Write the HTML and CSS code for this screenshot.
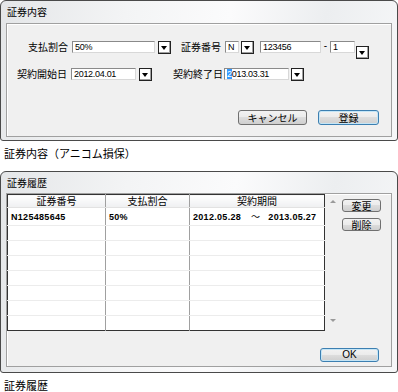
FILE: index.html
```html
<!DOCTYPE html>
<html lang="ja">
<head>
  <meta charset="UTF-8">
  <meta name="viewport" content="width=device-width, initial-scale=1.0">
  <title>証券</title>
  <link rel="stylesheet" href="styles.css">
</head>
<body>
  <!-- 証券内容 ダイアログ -->
  <div class="window win-policy">
    <div class="title">証券内容</div>
    <div class="panel panel-policy">
      <div class="row row-first">
        <span class="label lbl-rate">支払割合</span>
        <span class="field f-rate">50%</span>
        <span class="drop drop-rate"></span>
        <span class="label lbl-no">証券番号</span>
        <span class="field f-prefix">N</span>
        <span class="drop drop-prefix"></span>
        <span class="field f-number">123456</span>
        <span class="dash">-</span>
        <span class="field f-branch">1</span>
        <span class="drop drop-low"></span>
      </div>
      <div class="row row-second">
        <span class="label lbl-start">契約開始日</span>
        <span class="field f-date f-start">2012.04.01</span>
        <span class="drop drop-start"></span>
        <span class="label lbl-end">契約終了日</span>
        <span class="field f-date f-end"><span class="sel">2</span>013.03.31</span>
        <span class="drop"></span>
      </div>
      <div class="actions">
        <button class="btn btn-cancel">キャンセル</button>
        <button class="btn btn-default btn-save">登録</button>
      </div>
    </div>
  </div>
  <p class="caption caption-first">証券内容（アニコム損保）</p>

  <!-- 証券履歴 ダイアログ -->
  <div class="window win-history">
    <div class="title">証券履歴</div>
    <div class="panel panel-history">
      <div class="history-main">
        <table class="grid">
          <colgroup>
            <col class="c-no">
            <col class="c-rate">
            <col class="c-term">
          </colgroup>
          <thead>
            <tr>
              <th>証券番号</th>
              <th>支払割合</th>
              <th>契約期間</th>
            </tr>
          </thead>
          <tbody>
            <tr class="r-data">
              <td>N125485645</td>
              <td>50%</td>
              <td>2012.05.28<span class="tilde">〜</span>2013.05.27</td>
            </tr>
            <tr><td></td><td></td><td></td></tr>
            <tr><td></td><td></td><td></td></tr>
            <tr><td></td><td></td><td></td></tr>
            <tr><td></td><td></td><td></td></tr>
            <tr><td></td><td></td><td></td></tr>
            <tr><td></td><td></td><td></td></tr>
            <tr class="r-last"><td></td><td></td><td></td></tr>
          </tbody>
        </table>
        <div class="scroll">
          <span class="arrow-up"></span>
          <span class="arrow-down"></span>
        </div>
        <div class="side">
          <button class="btn btn-side">変更</button>
          <button class="btn btn-side">削除</button>
        </div>
      </div>
      <div class="actions actions-history">
        <button class="btn btn-default btn-ok">OK</button>
      </div>
    </div>
  </div>
  <p class="caption">証券履歴</p>
</body>
</html>
```

FILE: styles.css
```css
body {
  margin: 0;
  width: 398px;
  font-family: "Noto Sans CJK JP", "Liberation Sans", sans-serif;
  font-size: 10px;
  color: #000;
  background: #fff;
}

/* ウィンドウ枠 */
.window {
  box-sizing: border-box;
  width: 398px;
  border: 1px solid #4a4a4a;
  border-radius: 6px 6px 3px 3px;
  padding: 0 5px 3px 5px;
  background: linear-gradient(100deg, #e4e6e8 0%, #f3f4f5 30%, #fbfbfc 55%, #eceef0 78%, #f6f7f8 100%);
}
.win-policy {
  height: 141px;
}
.win-history {
  height: 202px;
  padding-bottom: 5px;
}
.title {
  height: 22px;
  line-height: 22px;
  padding-left: 1px;
  font-size: 10px;
}
.win-history .title {
  height: 21px;
  line-height: 21px;
}
.panel {
  box-sizing: border-box;
  border: 1px solid #a0a0a0;
  box-shadow: inset 1px 1px 0 #fff;
  background: #f0f0f0;
}
.panel-policy {
  height: 114px;
  padding-top: 17px;
}
.panel-history {
  height: 174px;
}

/* 入力行 */
.row {
  display: flex;
  align-items: flex-start;
  height: 14px;
}
.row-second {
  margin-top: 13px;
}
.label {
  line-height: 12px;
  white-space: nowrap;
}
.lbl-rate {
  width: 61px;
  margin-right: 4px;
  text-align: right;
}
.lbl-start {
  width: 60px;
  margin-right: 4px;
  text-align: right;
}
.lbl-no {
  width: 40px;
  margin-right: 4px;
}
.lbl-end {
  width: 50px;
  margin-right: 1px;
}
.field {
  box-sizing: border-box;
  height: 12px;
  padding-left: 2px;
  background: #fff;
  border: 1px solid;
  border-color: #8a8a8a #d8d8d8 #d8d8d8 #8a8a8a;
  font-family: "Liberation Sans", sans-serif;
  font-size: 9px;
  line-height: 10px;
  letter-spacing: -0.3px;
  white-space: nowrap;
}
.f-rate {
  width: 83px;
  margin-right: 3px;
}
.f-prefix {
  width: 14px;
  margin-right: 2px;
}
.f-number {
  width: 61px;
}
.f-branch {
  width: 25px;
  margin-right: 1px;
}
.f-date {
  width: 65px;
}
.f-start {
  margin-right: 3px;
}
.f-end {
  margin-right: 2px;
}
.sel {
  background: #3399ff;
  color: #fff;
}
.dash {
  width: 9px;
  text-align: center;
  line-height: 10px;
  font-family: "Liberation Sans", sans-serif;
}

/* ドロップダウンボタン */
.drop {
  position: relative;
  box-sizing: border-box;
  width: 13px;
  height: 13px;
  border: 1px solid #222;
  background: #fff;
  box-shadow: inset -1px -1px 0 #a0a0a0;
}
.drop::after {
  content: "";
  position: absolute;
  left: 2px;
  top: 4px;
  border-left: 3.5px solid transparent;
  border-right: 3.5px solid transparent;
  border-top: 4px solid #000;
}
.drop-rate {
  margin-right: 10px;
}
.drop-prefix {
  margin-right: 6px;
}
.drop-start {
  margin-right: 21px;
}
.drop-low {
  margin-top: 5px;
}

/* ボタン */
.actions {
  display: flex;
  justify-content: flex-end;
  gap: 11px;
  margin-top: 28px;
  padding-right: 12px;
}
.btn {
  box-sizing: border-box;
  height: 15px;
  padding: 0;
  border: 1px solid #707070;
  border-radius: 3px;
  background: linear-gradient(#f2f2f2 0%, #ebebeb 50%, #dddddd 50%, #cfcfcf 100%);
  font-family: "Noto Sans CJK JP", "Liberation Sans", sans-serif;
  font-size: 10px;
  line-height: 12px;
  color: #000;
}
.btn-default {
  border-color: #3c7fb1;
  box-shadow: inset 0 0 0 1px #c4e5f6;
}
.btn-cancel {
  width: 69px;
}
.btn-save {
  width: 61px;
}
.btn-ok {
  width: 59px;
  height: 14px;
  font-family: "Liberation Sans", sans-serif;
}

/* 履歴テーブル */
.history-main {
  display: flex;
  align-items: flex-start;
}
.grid {
  box-sizing: border-box;
  width: 318px;
  height: 133px;
  border-collapse: collapse;
  table-layout: fixed;
  border: 1px solid #333;
  background: #fff;
}
.c-no {
  width: 98px;
}
.c-rate {
  width: 84px;
}
.grid th {
  height: 12px;
  padding: 0;
  font-weight: normal;
  font-size: 10px;
  line-height: 12px;
  background: linear-gradient(#ffffff, #eeeff1);
  border-right: 1px solid #a0a0a0;
  border-bottom: 1px solid #e2e2e2;
}
.grid td {
  height: 14px;
  padding: 0 0 0 3px;
  border-right: 1px solid #a0a0a0;
  border-bottom: 1px solid #ececec;
  font-family: "Liberation Sans", sans-serif;
  font-size: 9px;
  font-weight: bold;
  letter-spacing: 0.3px;
  white-space: nowrap;
  vertical-align: middle;
}
.grid th:last-child,
.grid td:last-child {
  border-right: none;
}
.grid .r-data td {
  height: 17px;
}
.grid .r-last td {
  border-bottom: none;
}
.tilde {
  margin: 0 8px 0 10px;
  font-family: "Noto Sans CJK JP", sans-serif;
  font-weight: normal;
}
.scroll {
  position: relative;
  width: 15px;
  height: 133px;
}
.arrow-up,
.arrow-down {
  position: absolute;
  left: 5px;
  border-left: 3px solid transparent;
  border-right: 3px solid transparent;
}
.arrow-up {
  top: 6px;
  border-bottom: 3px solid #9a9a9a;
}
.arrow-down {
  top: 125px;
  border-top: 3px solid #9a9a9a;
}
.side {
  display: flex;
  flex-direction: column;
  gap: 6px;
  margin: 5px 0 0 2px;
}
.btn-side {
  width: 39px;
  height: 13px;
  line-height: 11px;
}
.actions-history {
  margin-top: 17px;
}

/* 見出し */
.caption {
  margin: 0;
  padding: 5px 0 11px 4px;
  font-size: 11px;
  line-height: 14px;
}
```
